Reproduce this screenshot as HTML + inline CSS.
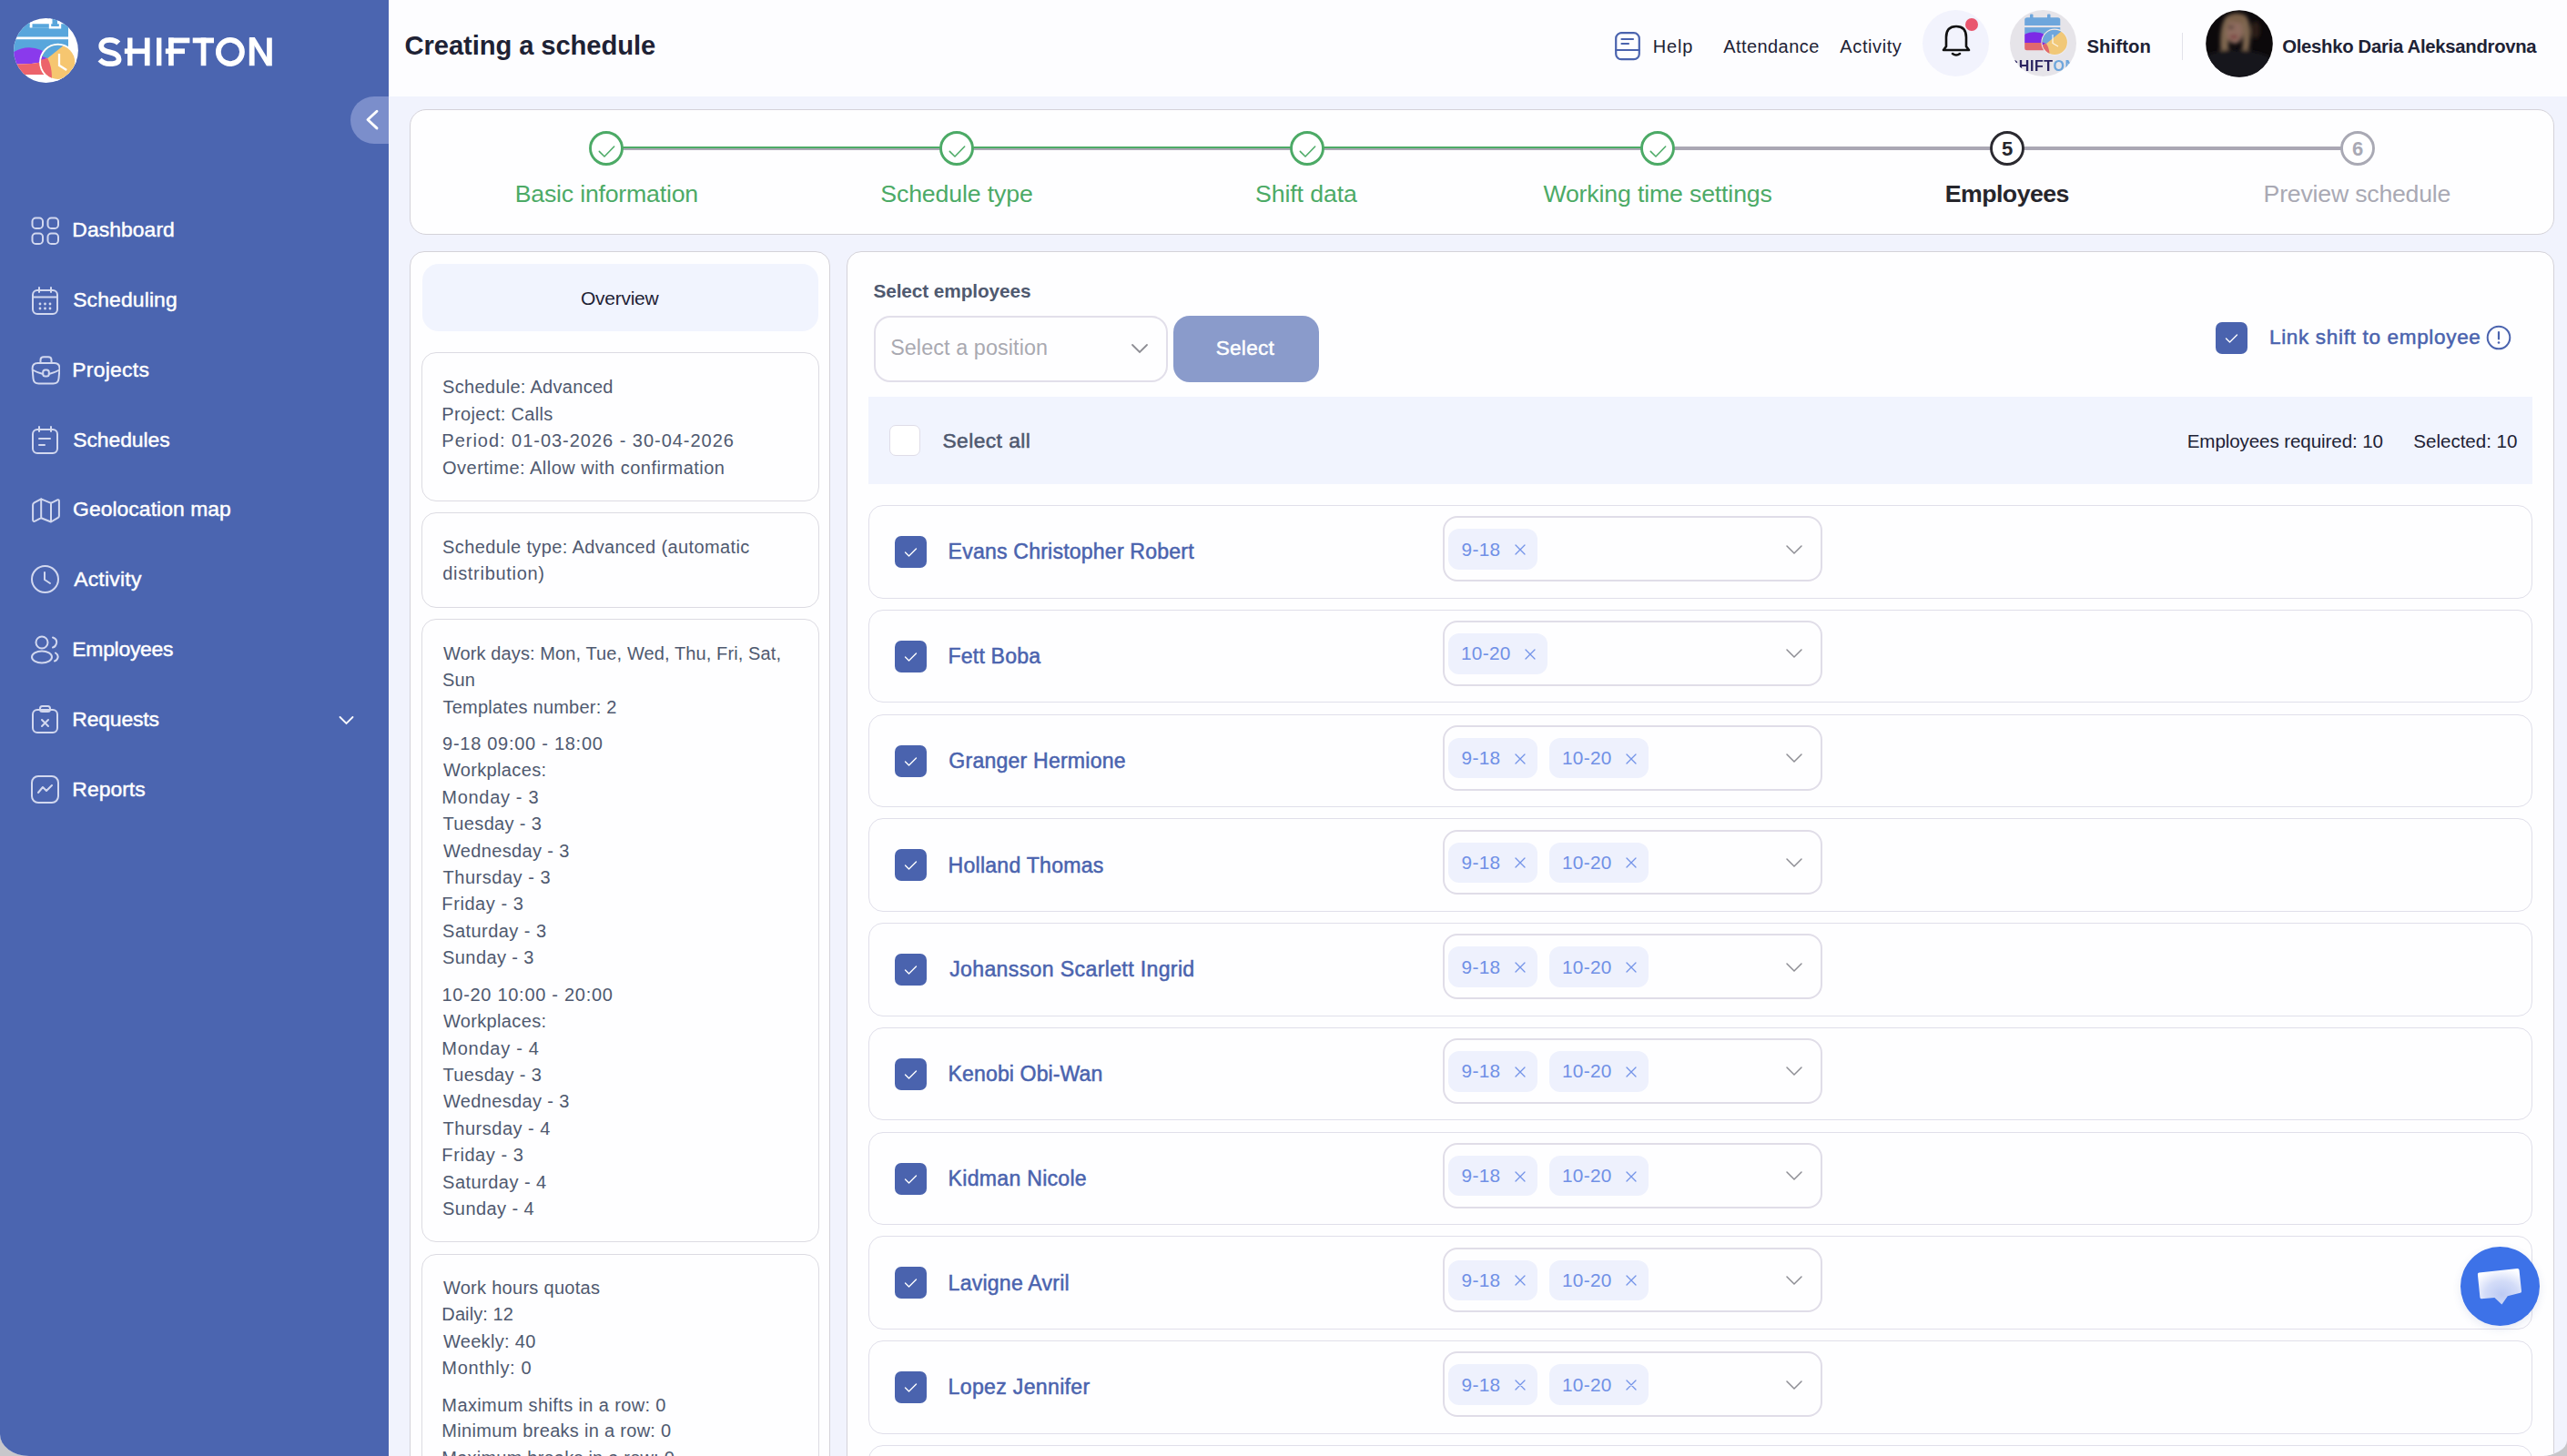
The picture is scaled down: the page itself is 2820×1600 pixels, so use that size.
<!DOCTYPE html>
<html><head><meta charset="utf-8"><title>Creating a schedule</title>
<style>
html,body{margin:0;padding:0;}
body{width:2820px;height:1600px;overflow:hidden;background:#c8c7cb;font-family:"Liberation Sans", sans-serif;}
#app{position:absolute;left:0;top:0;width:2820px;height:1600px;overflow:hidden;background:#f1f3fd;border-bottom-left-radius:32px 24px;border-bottom-right-radius:30px 17px;}
.t{position:absolute;white-space:nowrap;}
.r{position:absolute;}
</style></head><body><div id="app">
<div class="r" style="left:0.0px;top:0.0px;width:427.0px;height:1600.0px;background:#4b65b0;"></div>
<svg class="r" style="left:15px;top:20px;" width="71" height="71" viewBox="0 0 71 71">
<defs><clipPath id="lc"><circle cx="35.5" cy="35.5" r="35.4"/></clipPath><clipPath id="lk"><circle cx="48.7" cy="48.3" r="18.6"/></clipPath></defs>
<circle cx="35.5" cy="35.5" r="35.4" fill="#fff"/>
<g clip-path="url(#lc)">
<path d="M0 6.3 H17.8 V10.3 H40 V6.3 H51 V10.3 V6.3 H60 V20.5 H0 Z" fill="#58a6dc"/>
<path d="M13 5 H17.8 V8.2 H13 Z" fill="#58a6dc"/>
<path d="M20.3 6.3 H40 V10.3 H20.3 Z" fill="#58a6dc"/>
<rect x="17.8" y="4" width="2.5" height="6.3" fill="#fff"/>
<path d="M40 0 V10.3 H51 V0" stroke="#fff" stroke-width="2.4" fill="none"/>
<rect x="42.5" y="0.5" width="5.5" height="7.7" fill="#58a6dc"/>
<rect x="0" y="23.2" width="60" height="20" fill="#58a6dc"/>
<path d="M0 37 Q15 28.5 30 35 Q36 38 40 44 L33 48 Q18 51 0 50.5 Z" fill="#8a3aec"/>
<path d="M0 50.5 Q18 51 33 48 L37 62 H0 Z" fill="#ec636b"/>
<circle cx="48.7" cy="48.3" r="20.6" fill="#fff"/>
<g clip-path="url(#lk)">
<rect x="28" y="28" width="42" height="42" fill="#f6c670"/>
<path d="M37.3 43.9 L56 29 L20 20 L20 40 Z" fill="#58a6dc"/>
<path d="M37.3 43.9 L20 38 L20 50 Z" fill="#8a3aec"/>
<path d="M37.3 43.9 Q43 55 41.7 70 L20 70 L20 48 Z" fill="#ec636b"/>
</g>
<path d="M50 39 V51.8 L58.2 57" stroke="#fff" stroke-width="2.3" fill="none"/>
</g></svg>
<svg class="r" style="left:100px;top:35px;" width="210" height="45" viewBox="0 0 210 45"><g fill="#fff">
<path d="M30.2 12.6 C27.5 9.8 24 8.9 20.6 8.9 C15.2 8.9 11.2 11.3 11.2 15.6 C11.2 20 15.2 21.2 20.6 22.4 C26.5 23.6 30.6 25.4 30.6 30 C30.6 33.9 26.4 35.2 20.6 35.2 C16.4 35.2 12.6 33.8 9.6 30.6" stroke="#fff" stroke-width="5.7" fill="none"/>
<rect x="40.1" y="6.5" width="5.4" height="30.7"/><rect x="58.9" y="6.5" width="5.7" height="30.7"/><rect x="36.8" y="18.4" width="22.5" height="5.7"/>
<rect x="72" y="6.5" width="5.4" height="30.7"/>
<rect x="85.1" y="6.5" width="5.7" height="30.7"/><rect x="85.1" y="6.5" width="23.3" height="5.8"/><rect x="81.8" y="18.4" width="21.2" height="5.7"/>
<rect x="111.7" y="6.5" width="23.3" height="5.8"/><rect x="120.7" y="6.5" width="5.7" height="30.7"/>
<circle cx="152.9" cy="22" r="13.05" stroke="#fff" stroke-width="5.8" fill="none"/>
<rect x="173.8" y="6.5" width="5.8" height="30.7"/><rect x="193.1" y="6.5" width="5.7" height="30.7"/><path d="M173.8 6.1 H179.8 L198.8 37.2 H192.8 Z"/>
</g></svg>
<div class="r" style="left:385.0px;top:106.0px;width:42.0px;height:52.0px;background:#7b8ecb;border-radius:26px 0 0 26px;"></div>
<svg class="r" style="left:400px;top:118px;" width="18" height="28" viewBox="0 0 18 28"><path d="M14 4.2 L4 13.5 L14 22.9" stroke="#fff" stroke-width="2.9" fill="none" stroke-linecap="round" stroke-linejoin="round"/></svg>
<svg class="r" style="left:34px;top:237.7px;" width="32" height="32" viewBox="0 0 32 32"><g fill="none" stroke="#d2d8ef" stroke-width="2" stroke-linecap="round" stroke-linejoin="round"><rect x="1.5" y="1.5" width="11.5" height="11.5" rx="3.8"/><rect x="18.5" y="1.5" width="11.5" height="11.5" rx="3.8"/><rect x="1.5" y="18.5" width="11.5" height="11.5" rx="3.8"/><rect x="18.5" y="18.5" width="11.5" height="11.5" rx="3.8"/></g></svg>
<div class="t" style="left:79.32px;top:241.32px;font-size:22.9px;line-height:22.9px;color:#ffffff;font-weight:400;letter-spacing:0.066px;-webkit-text-stroke:0.45px #ffffff;">Dashboard</div>
<svg class="r" style="left:34px;top:314.6px;" width="32" height="32" viewBox="0 0 32 32"><g fill="none" stroke="#d2d8ef" stroke-width="2" stroke-linecap="round" stroke-linejoin="round"><rect x="2" y="4" width="27" height="26" rx="5"/><path d="M2 11.5 H29 M9 1 V6 M22 1 V6"/><g fill="#d2d8ef" stroke="none"><circle cx="10" cy="19" r="1.4"/><circle cx="15.5" cy="19" r="1.4"/><circle cx="21" cy="19" r="1.4"/><circle cx="10" cy="24" r="1.4"/><circle cx="15.5" cy="24" r="1.4"/><circle cx="21" cy="24" r="1.4"/></g></g></svg>
<div class="t" style="left:80.16px;top:318.22px;font-size:22.9px;line-height:22.9px;color:#ffffff;font-weight:400;letter-spacing:0.145px;-webkit-text-stroke:0.45px #ffffff;">Scheduling</div>
<svg class="r" style="left:34px;top:391.4px;" width="32" height="32" viewBox="0 0 32 32"><g fill="none" stroke="#d2d8ef" stroke-width="2" stroke-linecap="round" stroke-linejoin="round"><path d="M7.5 8 H25.5 Q31.5 8 31.5 14 L30.5 25 Q30 30.5 24.5 30.5 H8.5 Q3 30.5 2.5 25 L1.6 14 Q1.6 8 7.5 8 Z M10.5 8 V4.5 Q10.5 1.2 14 1.2 H19 Q22.5 1.2 22.5 4.5 V8 M1.8 15.5 Q7 18.5 13.2 20 M19.8 20 Q26 18.5 31.3 15.5"/><rect x="13.2" y="15.5" width="6.6" height="7" rx="2.5"/></g></svg>
<div class="t" style="left:79.32px;top:395.02px;font-size:22.9px;line-height:22.9px;color:#ffffff;font-weight:400;letter-spacing:0.269px;-webkit-text-stroke:0.45px #ffffff;">Projects</div>
<svg class="r" style="left:34px;top:468.4px;" width="32" height="32" viewBox="0 0 32 32"><g fill="none" stroke="#d2d8ef" stroke-width="2" stroke-linecap="round" stroke-linejoin="round"><rect x="2" y="4" width="27" height="26" rx="5"/><path d="M9 1 V6 M22 1 V6 M9 14 H21 M9 21 H15"/></g></svg>
<div class="t" style="left:80.16px;top:472.02px;font-size:22.9px;line-height:22.9px;color:#ffffff;font-weight:400;letter-spacing:-0.047px;-webkit-text-stroke:0.45px #ffffff;">Schedules</div>
<svg class="r" style="left:34px;top:544.6px;" width="32" height="32" viewBox="0 0 32 32"><g fill="none" stroke="#d2d8ef" stroke-width="2" stroke-linecap="round" stroke-linejoin="round"><path d="M2.1 10 Q2.1 8.3 3.6 7.4 L11.2 3.3 L22 7.8 L29 4.3 Q30.9 3.6 30.9 5.8 V22 Q30.9 23.2 29.8 23.9 L22 28.5 L11.2 24.2 L4.5 27.6 Q2.1 28.6 2.1 26 Z M11.2 3.3 V24.2 M22 7.8 V28.5"/></g></svg>
<div class="t" style="left:80.05px;top:548.22px;font-size:22.9px;line-height:22.9px;color:#ffffff;font-weight:400;letter-spacing:0.049px;-webkit-text-stroke:0.45px #ffffff;">Geolocation map</div>
<svg class="r" style="left:34px;top:621.4px;" width="32" height="32" viewBox="0 0 32 32"><g fill="none" stroke="#d2d8ef" stroke-width="2" stroke-linecap="round" stroke-linejoin="round"><circle cx="15.5" cy="15.5" r="14.5"/><path d="M15 8 V16 L21 20"/></g></svg>
<div class="t" style="left:81.16px;top:625.02px;font-size:22.9px;line-height:22.9px;color:#ffffff;font-weight:400;letter-spacing:0.252px;-webkit-text-stroke:0.45px #ffffff;">Activity</div>
<svg class="r" style="left:34px;top:698.3px;" width="32" height="32" viewBox="0 0 32 32"><g fill="none" stroke="#d2d8ef" stroke-width="2" stroke-linecap="round" stroke-linejoin="round"><circle cx="12" cy="8" r="6.5"/><ellipse cx="12" cy="24" rx="11" ry="6.5"/><path d="M24 2.5 Q29 4 28 9 Q27 13 24 13.5 M27 19.5 Q31 22 29 26 Q28 28 26 28.5"/></g></svg>
<div class="t" style="left:79.32px;top:701.92px;font-size:22.9px;line-height:22.9px;color:#ffffff;font-weight:400;letter-spacing:-0.259px;-webkit-text-stroke:0.45px #ffffff;">Employees</div>
<svg class="r" style="left:34px;top:775.0px;" width="32" height="32" viewBox="0 0 32 32"><g fill="none" stroke="#d2d8ef" stroke-width="2" stroke-linecap="round" stroke-linejoin="round"><rect x="2" y="5" width="27" height="25" rx="5"/><rect x="10" y="1" width="11" height="6" rx="2.5"/><path d="M12 16 L19 23 M19 16 L12 23"/></g></svg>
<div class="t" style="left:79.32px;top:778.62px;font-size:22.9px;line-height:22.9px;color:#ffffff;font-weight:400;letter-spacing:-0.163px;-webkit-text-stroke:0.45px #ffffff;">Requests</div>
<svg class="r" style="left:34px;top:852.1px;" width="32" height="32" viewBox="0 0 32 32"><g fill="none" stroke="#d2d8ef" stroke-width="2" stroke-linecap="round" stroke-linejoin="round"><rect x="1" y="1" width="29" height="29" rx="7"/><path d="M8 19 L13 13 L17 17 L23 11"/></g></svg>
<div class="t" style="left:79.32px;top:855.72px;font-size:22.9px;line-height:22.9px;color:#ffffff;font-weight:400;letter-spacing:0.037px;-webkit-text-stroke:0.45px #ffffff;">Reports</div>
<svg class="r" style="left:372px;top:786px;" width="17" height="11" viewBox="0 0 17 11"><path d="M1.5 2 L8.5 9 L15.5 2" stroke="#fff" stroke-width="1.8" fill="none" stroke-linecap="round"/></svg>
<div class="r" style="left:427.0px;top:0.0px;width:2393.0px;height:106.0px;background:#fdfdff;"></div>
<div class="t" style="left:444.60px;top:35.78px;font-size:29.2px;line-height:29.2px;color:#1e2235;font-weight:700;letter-spacing:-0.099px;">Creating a schedule</div>
<svg class="r" style="left:1773px;top:34px;" width="30" height="33" viewBox="0 0 30 33"><g fill="none" stroke="#4a63ae" stroke-width="2.2" stroke-linecap="round"><rect x="2.2" y="2.2" width="25.6" height="29" rx="6"/><path d="M2.2 21 H27.8 M8.5 9 H21 M8.5 14 H16"/></g></svg>
<div class="t" style="left:1815.76px;top:40.97px;font-size:20px;line-height:20px;color:#1e2235;font-weight:400;letter-spacing:0.849px;">Help</div>
<div class="t" style="left:1893.16px;top:40.97px;font-size:20px;line-height:20px;color:#1e2235;font-weight:400;letter-spacing:0.437px;">Attendance</div>
<div class="t" style="left:2021.36px;top:40.97px;font-size:20px;line-height:20px;color:#1e2235;font-weight:400;letter-spacing:0.591px;">Activity</div>
<div class="r" style="left:2112px;top:11px;width:73px;height:73px;border-radius:50%;background:#f2f3fd;"></div>
<svg class="r" style="left:2132px;top:26px;" width="34" height="38" viewBox="0 0 34 38"><g fill="none" stroke="#111" stroke-width="2.6" stroke-linecap="round" stroke-linejoin="round"><path d="M6 25 V15 Q6 3 17 3 Q28 3 28 15 V25 L31 29 H3 Z"/><path d="M13 33 Q17 36 21 33"/></g></svg>
<div class="r" style="left:2159px;top:20px;width:14px;height:14px;border-radius:50%;background:#e9566e;"></div>
<svg class="r" style="left:2208px;top:11px;" width="73" height="73" viewBox="0 0 73 73">
<defs><clipPath id="ac"><circle cx="36.5" cy="36.5" r="36.5"/></clipPath><clipPath id="ak"><circle cx="49.2" cy="35.4" r="13.7"/></clipPath><filter id="ab"><feGaussianBlur stdDeviation="0.5"/></filter></defs>
<circle cx="36.5" cy="36.5" r="36.5" fill="#e6e4e9"/>
<g clip-path="url(#ac)" filter="url(#ab)">
<rect x="22" y="4.5" width="3.5" height="6.5" rx="1" fill="#6ea6dc"/>
<rect x="41" y="4.5" width="3.5" height="6.5" rx="1" fill="#6ea6dc"/>
<path d="M16.2 17 V11 Q16.2 8.3 19 8.3 H52.5 Q55.3 8.3 55.3 11 V17 Z" fill="#6ea6dc"/>
<rect x="16.2" y="19.1" width="39.1" height="7" fill="#6ea6dc"/>
<path d="M16.2 26.5 Q28 21.5 40 27.5 V36 H16.2 Z" fill="#7b2ae6"/>
<path d="M16.2 36 H37.5 V44.2 H18.5 Q16.2 44.2 16.2 42 Z" fill="#e0686e"/>
<circle cx="49.2" cy="35.4" r="14.8" fill="#eceaf0"/>
<g clip-path="url(#ak)">
<rect x="30" y="20" width="35" height="32" fill="#f1c878"/>
<path d="M40 37 L57 23 L30 18 V33 Z" fill="#6ea6dc"/>
<path d="M40 37 L30 33 V40 Z" fill="#7b2ae6"/>
<path d="M40 37 Q44 43 43.5 52 H30 V40 Z" fill="#e0686e"/>
</g>
<path d="M47 27 V36.5 L53 40" stroke="#fff" stroke-width="1.3" fill="none" opacity="0.8"/>
<text x="-1.5" y="66.7" font-family="Liberation Sans" font-weight="700" font-size="16" fill="#2a2460" letter-spacing="0.6">SHIFT<tspan fill="#6ea6dc">ON</tspan></text>
</g></svg>
<div class="t" style="left:2292.42px;top:41.22px;font-size:20.3px;line-height:20.3px;color:#1e2235;font-weight:700;letter-spacing:0.124px;">Shifton</div>
<div class="r" style="left:2396.5px;top:36.0px;width:1.0px;height:30.0px;background:#e2e2ea;"></div>
<svg class="r" style="left:2423px;top:11px;" width="74" height="74" viewBox="0 0 74 74">
<defs><clipPath id="uc"><circle cx="37" cy="37" r="36.8"/></clipPath><filter id="ub" x="-50%" y="-50%" width="200%" height="200%"><feGaussianBlur stdDeviation="2.2"/></filter></defs>
<circle cx="37" cy="37" r="36.8" fill="#0c090b"/>
<g clip-path="url(#uc)">
<g filter="url(#ub)">
<path d="M17 50 Q14 20 22 8 Q32 0 44 6 Q50 14 49 30 Q48 44 45 50 L40 44 Q42 30 40 20 L26 20 Q24 34 26 52 Z" fill="#7e6650"/>
<ellipse cx="32" cy="24" rx="9" ry="13" fill="#8e6c5e"/>
<ellipse cx="35" cy="9" rx="10" ry="5" fill="#7a6048"/>
<ellipse cx="31" cy="29.5" rx="4" ry="2" fill="#7a3a3c"/>
<ellipse cx="28" cy="19" rx="3" ry="1.5" fill="#3a2a28"/>
<path d="M0 74 V50 Q20 42 37 44 Q60 44 74 54 V74 Z" fill="#17161b"/><ellipse cx="55" cy="22" rx="5" ry="10" fill="#2a1d16"/>
</g>
</g></svg>
<div class="t" style="left:2507.17px;top:41.22px;font-size:20.3px;line-height:20.3px;color:#1e2235;font-weight:700;letter-spacing:-0.277px;">Oleshko Daria Aleksandrovna</div>
<div class="r" style="left:450.0px;top:120.0px;width:2356.0px;height:138.0px;background:#fefeff;border:1px solid #d4d2d9;border-radius:18px;box-sizing:border-box;"></div>
<div class="r" style="left:684.0px;top:161.0px;width:349.0px;height:3.8px;background:#aaa7b4;"></div>
<div class="r" style="left:684.0px;top:161.0px;width:349.0px;height:1.9px;background:#4caa66;"></div>
<div class="r" style="left:1069.0px;top:161.0px;width:348.5px;height:3.8px;background:#aaa7b4;"></div>
<div class="r" style="left:1069.0px;top:161.0px;width:348.5px;height:1.9px;background:#4caa66;"></div>
<div class="r" style="left:1453.5px;top:161.0px;width:349.0px;height:3.8px;background:#aaa7b4;"></div>
<div class="r" style="left:1453.5px;top:161.0px;width:349.0px;height:1.9px;background:#4caa66;"></div>
<div class="r" style="left:1838.5px;top:161.0px;width:348.5px;height:3.8px;background:#aaa7b4;"></div>
<div class="r" style="left:2223.0px;top:161.0px;width:349.0px;height:3.8px;background:#aaa7b4;"></div>
<svg class="r" style="left:646px;top:143px;" width="40" height="40" viewBox="0 0 40 40"><circle cx="20" cy="20" r="17.5" fill="#fff" stroke="#4caa66" stroke-width="2.9"/><path d="M12.3 23.4 L18 29 L28.7 18" stroke="#4caa66" stroke-width="1.5" fill="none" stroke-linecap="round" stroke-linejoin="round"/></svg>
<svg class="r" style="left:1031px;top:143px;" width="40" height="40" viewBox="0 0 40 40"><circle cx="20" cy="20" r="17.5" fill="#fff" stroke="#4caa66" stroke-width="2.9"/><path d="M12.3 23.4 L18 29 L28.7 18" stroke="#4caa66" stroke-width="1.5" fill="none" stroke-linecap="round" stroke-linejoin="round"/></svg>
<svg class="r" style="left:1415.5px;top:143px;" width="40" height="40" viewBox="0 0 40 40"><circle cx="20" cy="20" r="17.5" fill="#fff" stroke="#4caa66" stroke-width="2.9"/><path d="M12.3 23.4 L18 29 L28.7 18" stroke="#4caa66" stroke-width="1.5" fill="none" stroke-linecap="round" stroke-linejoin="round"/></svg>
<svg class="r" style="left:1800.5px;top:143px;" width="40" height="40" viewBox="0 0 40 40"><circle cx="20" cy="20" r="17.5" fill="#fff" stroke="#4caa66" stroke-width="2.9"/><path d="M12.3 23.4 L18 29 L28.7 18" stroke="#4caa66" stroke-width="1.5" fill="none" stroke-linecap="round" stroke-linejoin="round"/></svg>
<svg class="r" style="left:2185px;top:143px;" width="40" height="40" viewBox="0 0 40 40"><circle cx="20" cy="20" r="17.5" fill="#fff" stroke="#2b2a30" stroke-width="2.9"/></svg>
<div class="t" style="left:2185.0px;top:152.9px;font-size:22px;line-height:22px;color:#26262c;font-weight:700;width:40px;text-align:center;">5</div>
<svg class="r" style="left:2570px;top:143px;" width="40" height="40" viewBox="0 0 40 40"><circle cx="20" cy="20" r="17.5" fill="#fff" stroke="#a9a9b4" stroke-width="2.9"/></svg>
<div class="t" style="left:2570.0px;top:152.9px;font-size:22px;line-height:22px;color:#a9a9b4;font-weight:700;width:40px;text-align:center;">6</div>
<div class="t" style="left:565.71px;top:200.00px;font-size:26.7px;line-height:26.7px;color:#4caa66;font-weight:400;letter-spacing:-0.204px;">Basic information</div>
<div class="t" style="left:967.29px;top:200.00px;font-size:26.7px;line-height:26.7px;color:#4caa66;font-weight:400;letter-spacing:-0.135px;">Schedule type</div>
<div class="t" style="left:1378.99px;top:200.00px;font-size:26.7px;line-height:26.7px;color:#4caa66;font-weight:400;letter-spacing:-0.100px;">Shift data</div>
<div class="t" style="left:1695.38px;top:200.00px;font-size:26.7px;line-height:26.7px;color:#4caa66;font-weight:400;letter-spacing:-0.157px;">Working time settings</div>
<div class="t" style="left:2136.71px;top:200.00px;font-size:26.7px;line-height:26.7px;color:#26262c;font-weight:700;letter-spacing:-0.525px;">Employees</div>
<div class="t" style="left:2486.61px;top:200.00px;font-size:26.7px;line-height:26.7px;color:#a9a9b4;font-weight:400;letter-spacing:-0.225px;">Preview schedule</div>
<div class="r" style="left:450.0px;top:276.0px;width:462.0px;height:1424.0px;background:#fefeff;border:1px solid #d4d2d9;border-radius:16px;box-sizing:border-box;"></div>
<div class="r" style="left:464.0px;top:290.0px;width:435.0px;height:74.0px;background:#f1f4fe;border-radius:18px;"></div>
<div class="t" style="left:638.01px;top:316.62px;font-size:21px;line-height:21px;color:#1e2235;font-weight:400;letter-spacing:-0.268px;">Overview</div>
<div class="r" style="left:463.0px;top:387.0px;width:437.0px;height:164.0px;background:#fefeff;border:1px solid #dcdbe2;border-radius:16px;box-sizing:border-box;"></div>
<div class="r" style="left:463.0px;top:563.0px;width:437.0px;height:105.0px;background:#fefeff;border:1px solid #dcdbe2;border-radius:16px;box-sizing:border-box;"></div>
<div class="r" style="left:463.0px;top:680.0px;width:437.0px;height:685.0px;background:#fefeff;border:1px solid #dcdbe2;border-radius:16px;box-sizing:border-box;"></div>
<div class="r" style="left:463.0px;top:1378.0px;width:437.0px;height:322.0px;background:#fefeff;border:1px solid #dcdbe2;border-radius:16px;box-sizing:border-box;"></div>
<div class="t" style="left:486.09px;top:415.27px;font-size:20px;line-height:20px;color:#4f596f;font-weight:400;letter-spacing:0.296px;">Schedule: Advanced</div>
<div class="t" style="left:485.36px;top:445.07px;font-size:20px;line-height:20px;color:#4f596f;font-weight:400;letter-spacing:0.319px;">Project: Calls</div>
<div class="t" style="left:485.36px;top:473.87px;font-size:20px;line-height:20px;color:#4f596f;font-weight:400;letter-spacing:0.974px;">Period: 01-03-2026 - 30-04-2026</div>
<div class="t" style="left:486.05px;top:504.07px;font-size:20px;line-height:20px;color:#4f596f;font-weight:400;letter-spacing:0.481px;">Overtime: Allow with confirmation</div>
<div class="t" style="left:486.09px;top:590.77px;font-size:20px;line-height:20px;color:#4f596f;font-weight:400;letter-spacing:0.378px;">Schedule type: Advanced (automatic</div>
<div class="t" style="left:486.16px;top:619.57px;font-size:20px;line-height:20px;color:#4f596f;font-weight:400;letter-spacing:0.708px;">distribution)</div>
<div class="t" style="left:486.91px;top:708.07px;font-size:20px;line-height:20px;color:#4f596f;font-weight:400;letter-spacing:0.110px;">Work days: Mon, Tue, Wed, Thu, Fri, Sat,</div>
<div class="t" style="left:486.09px;top:737.37px;font-size:20px;line-height:20px;color:#4f596f;font-weight:400;letter-spacing:0.111px;">Sun</div>
<div class="t" style="left:486.55px;top:766.97px;font-size:20px;line-height:20px;color:#4f596f;font-weight:400;letter-spacing:0.227px;">Templates number: 2</div>
<div class="t" style="left:486.06px;top:807.07px;font-size:20px;line-height:20px;color:#4f596f;font-weight:400;letter-spacing:0.727px;">9-18 09:00 - 18:00</div>
<div class="t" style="left:486.91px;top:836.47px;font-size:20px;line-height:20px;color:#4f596f;font-weight:400;letter-spacing:0.348px;">Workplaces:</div>
<div class="t" style="left:485.36px;top:866.07px;font-size:20px;line-height:20px;color:#4f596f;font-weight:400;letter-spacing:0.686px;">Monday - 3</div>
<div class="t" style="left:486.55px;top:894.77px;font-size:20px;line-height:20px;color:#4f596f;font-weight:400;letter-spacing:0.342px;">Tuesday - 3</div>
<div class="t" style="left:486.91px;top:924.97px;font-size:20px;line-height:20px;color:#4f596f;font-weight:400;letter-spacing:0.363px;">Wednesday - 3</div>
<div class="t" style="left:486.55px;top:953.67px;font-size:20px;line-height:20px;color:#4f596f;font-weight:400;letter-spacing:0.524px;">Thursday - 3</div>
<div class="t" style="left:485.36px;top:982.97px;font-size:20px;line-height:20px;color:#4f596f;font-weight:400;letter-spacing:0.573px;">Friday - 3</div>
<div class="t" style="left:486.09px;top:1013.07px;font-size:20px;line-height:20px;color:#4f596f;font-weight:400;letter-spacing:0.458px;">Saturday - 3</div>
<div class="t" style="left:486.09px;top:1041.87px;font-size:20px;line-height:20px;color:#4f596f;font-weight:400;letter-spacing:0.407px;">Sunday - 3</div>
<div class="t" style="left:485.48px;top:1082.67px;font-size:20px;line-height:20px;color:#4f596f;font-weight:400;letter-spacing:0.712px;">10-20 10:00 - 20:00</div>
<div class="t" style="left:486.91px;top:1112.07px;font-size:20px;line-height:20px;color:#4f596f;font-weight:400;letter-spacing:0.348px;">Workplaces:</div>
<div class="t" style="left:485.36px;top:1141.67px;font-size:20px;line-height:20px;color:#4f596f;font-weight:400;letter-spacing:0.731px;">Monday - 4</div>
<div class="t" style="left:486.55px;top:1170.97px;font-size:20px;line-height:20px;color:#4f596f;font-weight:400;letter-spacing:0.342px;">Tuesday - 3</div>
<div class="t" style="left:486.91px;top:1199.87px;font-size:20px;line-height:20px;color:#4f596f;font-weight:400;letter-spacing:0.363px;">Wednesday - 3</div>
<div class="t" style="left:486.55px;top:1229.87px;font-size:20px;line-height:20px;color:#4f596f;font-weight:400;letter-spacing:0.515px;">Thursday - 4</div>
<div class="t" style="left:485.36px;top:1258.77px;font-size:20px;line-height:20px;color:#4f596f;font-weight:400;letter-spacing:0.573px;">Friday - 3</div>
<div class="t" style="left:486.09px;top:1288.77px;font-size:20px;line-height:20px;color:#4f596f;font-weight:400;letter-spacing:0.468px;">Saturday - 4</div>
<div class="t" style="left:486.09px;top:1317.67px;font-size:20px;line-height:20px;color:#4f596f;font-weight:400;letter-spacing:0.418px;">Sunday - 4</div>
<div class="t" style="left:486.91px;top:1404.87px;font-size:20px;line-height:20px;color:#4f596f;font-weight:400;letter-spacing:0.285px;">Work hours quotas</div>
<div class="t" style="left:485.36px;top:1434.47px;font-size:20px;line-height:20px;color:#4f596f;font-weight:400;letter-spacing:0.092px;">Daily: 12</div>
<div class="t" style="left:486.91px;top:1463.77px;font-size:20px;line-height:20px;color:#4f596f;font-weight:400;letter-spacing:0.316px;">Weekly: 40</div>
<div class="t" style="left:485.36px;top:1492.67px;font-size:20px;line-height:20px;color:#4f596f;font-weight:400;letter-spacing:0.673px;">Monthly: 0</div>
<div class="t" style="left:485.36px;top:1533.77px;font-size:20px;line-height:20px;color:#4f596f;font-weight:400;letter-spacing:0.376px;">Maximum shifts in a row: 0</div>
<div class="t" style="left:485.36px;top:1562.37px;font-size:20px;line-height:20px;color:#4f596f;font-weight:400;letter-spacing:0.292px;">Minimum breaks in a row: 0</div>
<div class="t" style="left:485.36px;top:1591.57px;font-size:20px;line-height:20px;color:#4f596f;font-weight:400;letter-spacing:0.214px;">Maximum breaks in a row: 0</div>
<div class="r" style="left:930.0px;top:276.0px;width:1876.0px;height:1424.0px;background:#fefeff;border:1px solid #d4d2d9;border-radius:16px;box-sizing:border-box;"></div>
<div class="t" style="left:959.40px;top:309.69px;font-size:20.8px;line-height:20.8px;color:#4f596f;font-weight:700;letter-spacing:-0.096px;">Select employees</div>
<div class="r" style="left:959.5px;top:346.5px;width:323.5px;height:73.0px;background:#fefeff;border:2px solid #e2dfea;border-radius:18px;box-sizing:border-box;"></div>
<div class="t" style="left:978.14px;top:371.28px;font-size:23.3px;line-height:23.3px;color:#a9a9b1;font-weight:400;letter-spacing:0.119px;">Select a position</div>
<svg class="r" style="left:1242px;top:376px;" width="20" height="14" viewBox="0 0 20 14"><path d="M2 3 L10 11 L18 3" stroke="#8d8d94" stroke-width="1.8" fill="none" stroke-linecap="round"/></svg>
<div class="r" style="left:1289.4px;top:346.5px;width:159.6px;height:73.0px;background:#8a9bcb;border-radius:18px;"></div>
<div class="t" style="left:1335.77px;top:371.87px;font-size:22.6px;line-height:22.6px;color:#ffffff;font-weight:400;letter-spacing:0.236px;-webkit-text-stroke:0.45px #ffffff;">Select</div>
<div class="r" style="left:2434.0px;top:354.0px;width:35.0px;height:35.0px;background:#4a63ae;border-radius:7px;"></div>
<svg class="r" style="left:2434px;top:354px;" width="35" height="35" viewBox="0 0 35 35"><path d="M11.5 18 L15.5 22 L23.5 14" stroke="#fff" stroke-width="1.35" fill="none" stroke-linecap="round" stroke-linejoin="round"/></svg>
<div class="t" style="left:2492.95px;top:360.25px;font-size:22.5px;line-height:22.5px;color:#4a63ae;font-weight:400;letter-spacing:0.682px;-webkit-text-stroke:0.5px #4a63ae;">Link shift to employee</div>
<svg class="r" style="left:2731px;top:357px;" width="28" height="28" viewBox="0 0 28 28"><circle cx="14" cy="14" r="12.3" stroke="#4a63ae" stroke-width="2" fill="none"/><path d="M14 8 V15.5" stroke="#4a63ae" stroke-width="2.2" stroke-linecap="round"/><circle cx="14" cy="19.5" r="1.3" fill="#4a63ae"/></svg>
<div class="r" style="left:954.0px;top:436.0px;width:1828.0px;height:96.0px;background:#f1f4fe;"></div>
<div class="r" style="left:976.5px;top:467.0px;width:34.0px;height:34.0px;background:#fff;border:1px solid #dfdde8;border-radius:7px;box-sizing:border-box;"></div>
<div class="t" style="left:1035.46px;top:473.30px;font-size:22.8px;line-height:22.8px;color:#4f596f;font-weight:400;letter-spacing:0.427px;-webkit-text-stroke:0.5px #4d566e;">Select all</div>
<div class="t" style="left:2402.71px;top:474.76px;font-size:20.6px;line-height:20.6px;color:#1e2235;font-weight:400;letter-spacing:-0.103px;">Employees required: 10</div>
<div class="t" style="left:2651.36px;top:474.76px;font-size:20.6px;line-height:20.6px;color:#1e2235;font-weight:400;letter-spacing:-0.044px;">Selected: 10</div>
<div class="r" style="left:954.0px;top:555.0px;width:1828.0px;height:102.5px;background:#fefeff;border:1px solid #e0dfea;border-radius:16px;box-sizing:border-box;"></div>
<div class="r" style="left:983.0px;top:589.0px;width:35.0px;height:35.0px;background:#4a63ae;border-radius:7px;"></div>
<svg class="r" style="left:983px;top:589.0px;" width="35" height="35" viewBox="0 0 35 35"><path d="M11.5 18 L15.5 22 L23.5 14" stroke="#fff" stroke-width="1.35" fill="none" stroke-linecap="round" stroke-linejoin="round"/></svg>
<div class="t" style="left:1041.61px;top:595.25px;font-size:23.1px;line-height:23.1px;color:#4a63ae;font-weight:400;letter-spacing:0.187px;-webkit-text-stroke:0.5px #4a63ae;">Evans Christopher Robert</div>
<div class="r" style="left:1584.5px;top:567.4px;width:417.0px;height:71.8px;background:#fefeff;border:2px solid #e0dde8;border-radius:16px;box-sizing:border-box;"></div>
<div class="r" style="left:1591.3px;top:581.3px;width:97.4px;height:44.6px;background:#eef1fd;border-radius:12px;"></div>
<div class="t" style="left:1605.53px;top:593.59px;font-size:20.8px;line-height:20.8px;color:#7090e6;font-weight:400;letter-spacing:0.316px;">9-18</div>
<svg class="r" style="left:1663.8px;top:598.0px;" width="12" height="12" viewBox="0 0 12 12"><path d="M1 1 L11 11 M11 1 L1 11" stroke="#7393e8" stroke-width="1.3" stroke-linecap="round"/></svg>
<svg class="r" style="left:1961px;top:597.5px;" width="20" height="12" viewBox="0 0 20 12"><path d="M2 2 L10 10 L18 2" stroke="#8d8d94" stroke-width="1.5" fill="none" stroke-linecap="round"/></svg>
<div class="r" style="left:954.0px;top:669.8px;width:1828.0px;height:102.5px;background:#fefeff;border:1px solid #e0dfea;border-radius:16px;box-sizing:border-box;"></div>
<div class="r" style="left:983.0px;top:703.8px;width:35.0px;height:35.0px;background:#4a63ae;border-radius:7px;"></div>
<svg class="r" style="left:983px;top:703.8px;" width="35" height="35" viewBox="0 0 35 35"><path d="M11.5 18 L15.5 22 L23.5 14" stroke="#fff" stroke-width="1.35" fill="none" stroke-linecap="round" stroke-linejoin="round"/></svg>
<div class="t" style="left:1041.61px;top:710.00px;font-size:23.1px;line-height:23.1px;color:#4a63ae;font-weight:400;letter-spacing:0.154px;-webkit-text-stroke:0.5px #4a63ae;">Fett Boba</div>
<div class="r" style="left:1584.5px;top:682.1px;width:417.0px;height:71.8px;background:#fefeff;border:2px solid #e0dde8;border-radius:16px;box-sizing:border-box;"></div>
<div class="r" style="left:1591.3px;top:696.0px;width:109.2px;height:44.6px;background:#eef1fd;border-radius:12px;"></div>
<div class="t" style="left:1604.92px;top:708.34px;font-size:20.8px;line-height:20.8px;color:#7090e6;font-weight:400;letter-spacing:0.325px;">10-20</div>
<svg class="r" style="left:1674.9px;top:712.8px;" width="12" height="12" viewBox="0 0 12 12"><path d="M1 1 L11 11 M11 1 L1 11" stroke="#7393e8" stroke-width="1.3" stroke-linecap="round"/></svg>
<svg class="r" style="left:1961px;top:712.2px;" width="20" height="12" viewBox="0 0 20 12"><path d="M2 2 L10 10 L18 2" stroke="#8d8d94" stroke-width="1.5" fill="none" stroke-linecap="round"/></svg>
<div class="r" style="left:954.0px;top:784.5px;width:1828.0px;height:102.5px;background:#fefeff;border:1px solid #e0dfea;border-radius:16px;box-sizing:border-box;"></div>
<div class="r" style="left:983.0px;top:818.5px;width:35.0px;height:35.0px;background:#4a63ae;border-radius:7px;"></div>
<svg class="r" style="left:983px;top:818.5px;" width="35" height="35" viewBox="0 0 35 35"><path d="M11.5 18 L15.5 22 L23.5 14" stroke="#fff" stroke-width="1.35" fill="none" stroke-linecap="round" stroke-linejoin="round"/></svg>
<div class="t" style="left:1042.34px;top:824.75px;font-size:23.1px;line-height:23.1px;color:#4a63ae;font-weight:400;letter-spacing:0.199px;-webkit-text-stroke:0.5px #4a63ae;">Granger Hermione</div>
<div class="r" style="left:1584.5px;top:796.9px;width:417.0px;height:71.8px;background:#fefeff;border:2px solid #e0dde8;border-radius:16px;box-sizing:border-box;"></div>
<div class="r" style="left:1591.3px;top:810.8px;width:97.4px;height:44.6px;background:#eef1fd;border-radius:12px;"></div>
<div class="t" style="left:1605.53px;top:823.09px;font-size:20.8px;line-height:20.8px;color:#7090e6;font-weight:400;letter-spacing:0.316px;">9-18</div>
<svg class="r" style="left:1663.8px;top:827.5px;" width="12" height="12" viewBox="0 0 12 12"><path d="M1 1 L11 11 M11 1 L1 11" stroke="#7393e8" stroke-width="1.3" stroke-linecap="round"/></svg>
<div class="r" style="left:1702.3px;top:810.8px;width:109.2px;height:44.6px;background:#eef1fd;border-radius:12px;"></div>
<div class="t" style="left:1715.92px;top:823.09px;font-size:20.8px;line-height:20.8px;color:#7090e6;font-weight:400;letter-spacing:0.325px;">10-20</div>
<svg class="r" style="left:1785.9px;top:827.5px;" width="12" height="12" viewBox="0 0 12 12"><path d="M1 1 L11 11 M11 1 L1 11" stroke="#7393e8" stroke-width="1.3" stroke-linecap="round"/></svg>
<svg class="r" style="left:1961px;top:827.0px;" width="20" height="12" viewBox="0 0 20 12"><path d="M2 2 L10 10 L18 2" stroke="#8d8d94" stroke-width="1.5" fill="none" stroke-linecap="round"/></svg>
<div class="r" style="left:954.0px;top:899.2px;width:1828.0px;height:102.5px;background:#fefeff;border:1px solid #e0dfea;border-radius:16px;box-sizing:border-box;"></div>
<div class="r" style="left:983.0px;top:933.2px;width:35.0px;height:35.0px;background:#4a63ae;border-radius:7px;"></div>
<svg class="r" style="left:983px;top:933.2px;" width="35" height="35" viewBox="0 0 35 35"><path d="M11.5 18 L15.5 22 L23.5 14" stroke="#fff" stroke-width="1.35" fill="none" stroke-linecap="round" stroke-linejoin="round"/></svg>
<div class="t" style="left:1041.61px;top:939.50px;font-size:23.1px;line-height:23.1px;color:#4a63ae;font-weight:400;letter-spacing:0.226px;-webkit-text-stroke:0.5px #4a63ae;">Holland Thomas</div>
<div class="r" style="left:1584.5px;top:911.6px;width:417.0px;height:71.8px;background:#fefeff;border:2px solid #e0dde8;border-radius:16px;box-sizing:border-box;"></div>
<div class="r" style="left:1591.3px;top:925.5px;width:97.4px;height:44.6px;background:#eef1fd;border-radius:12px;"></div>
<div class="t" style="left:1605.53px;top:937.84px;font-size:20.8px;line-height:20.8px;color:#7090e6;font-weight:400;letter-spacing:0.316px;">9-18</div>
<svg class="r" style="left:1663.8px;top:942.2px;" width="12" height="12" viewBox="0 0 12 12"><path d="M1 1 L11 11 M11 1 L1 11" stroke="#7393e8" stroke-width="1.3" stroke-linecap="round"/></svg>
<div class="r" style="left:1702.3px;top:925.5px;width:109.2px;height:44.6px;background:#eef1fd;border-radius:12px;"></div>
<div class="t" style="left:1715.92px;top:937.84px;font-size:20.8px;line-height:20.8px;color:#7090e6;font-weight:400;letter-spacing:0.325px;">10-20</div>
<svg class="r" style="left:1785.9px;top:942.2px;" width="12" height="12" viewBox="0 0 12 12"><path d="M1 1 L11 11 M11 1 L1 11" stroke="#7393e8" stroke-width="1.3" stroke-linecap="round"/></svg>
<svg class="r" style="left:1961px;top:941.8px;" width="20" height="12" viewBox="0 0 20 12"><path d="M2 2 L10 10 L18 2" stroke="#8d8d94" stroke-width="1.5" fill="none" stroke-linecap="round"/></svg>
<div class="r" style="left:954.0px;top:1014.0px;width:1828.0px;height:102.5px;background:#fefeff;border:1px solid #e0dfea;border-radius:16px;box-sizing:border-box;"></div>
<div class="r" style="left:983.0px;top:1048.0px;width:35.0px;height:35.0px;background:#4a63ae;border-radius:7px;"></div>
<svg class="r" style="left:983px;top:1048.0px;" width="35" height="35" viewBox="0 0 35 35"><path d="M11.5 18 L15.5 22 L23.5 14" stroke="#fff" stroke-width="1.35" fill="none" stroke-linecap="round" stroke-linejoin="round"/></svg>
<div class="t" style="left:1043.14px;top:1054.25px;font-size:23.1px;line-height:23.1px;color:#4a63ae;font-weight:400;letter-spacing:0.354px;-webkit-text-stroke:0.5px #4a63ae;">Johansson Scarlett Ingrid</div>
<div class="r" style="left:1584.5px;top:1026.4px;width:417.0px;height:71.8px;background:#fefeff;border:2px solid #e0dde8;border-radius:16px;box-sizing:border-box;"></div>
<div class="r" style="left:1591.3px;top:1040.3px;width:97.4px;height:44.6px;background:#eef1fd;border-radius:12px;"></div>
<div class="t" style="left:1605.53px;top:1052.59px;font-size:20.8px;line-height:20.8px;color:#7090e6;font-weight:400;letter-spacing:0.316px;">9-18</div>
<svg class="r" style="left:1663.8px;top:1057.0px;" width="12" height="12" viewBox="0 0 12 12"><path d="M1 1 L11 11 M11 1 L1 11" stroke="#7393e8" stroke-width="1.3" stroke-linecap="round"/></svg>
<div class="r" style="left:1702.3px;top:1040.3px;width:109.2px;height:44.6px;background:#eef1fd;border-radius:12px;"></div>
<div class="t" style="left:1715.92px;top:1052.59px;font-size:20.8px;line-height:20.8px;color:#7090e6;font-weight:400;letter-spacing:0.325px;">10-20</div>
<svg class="r" style="left:1785.9px;top:1057.0px;" width="12" height="12" viewBox="0 0 12 12"><path d="M1 1 L11 11 M11 1 L1 11" stroke="#7393e8" stroke-width="1.3" stroke-linecap="round"/></svg>
<svg class="r" style="left:1961px;top:1056.5px;" width="20" height="12" viewBox="0 0 20 12"><path d="M2 2 L10 10 L18 2" stroke="#8d8d94" stroke-width="1.5" fill="none" stroke-linecap="round"/></svg>
<div class="r" style="left:954.0px;top:1128.8px;width:1828.0px;height:102.5px;background:#fefeff;border:1px solid #e0dfea;border-radius:16px;box-sizing:border-box;"></div>
<div class="r" style="left:983.0px;top:1162.8px;width:35.0px;height:35.0px;background:#4a63ae;border-radius:7px;"></div>
<svg class="r" style="left:983px;top:1162.8px;" width="35" height="35" viewBox="0 0 35 35"><path d="M11.5 18 L15.5 22 L23.5 14" stroke="#fff" stroke-width="1.35" fill="none" stroke-linecap="round" stroke-linejoin="round"/></svg>
<div class="t" style="left:1041.61px;top:1169.00px;font-size:23.1px;line-height:23.1px;color:#4a63ae;font-weight:400;letter-spacing:0.093px;-webkit-text-stroke:0.5px #4a63ae;">Kenobi Obi-Wan</div>
<div class="r" style="left:1584.5px;top:1141.2px;width:417.0px;height:71.8px;background:#fefeff;border:2px solid #e0dde8;border-radius:16px;box-sizing:border-box;"></div>
<div class="r" style="left:1591.3px;top:1155.0px;width:97.4px;height:44.6px;background:#eef1fd;border-radius:12px;"></div>
<div class="t" style="left:1605.53px;top:1167.34px;font-size:20.8px;line-height:20.8px;color:#7090e6;font-weight:400;letter-spacing:0.316px;">9-18</div>
<svg class="r" style="left:1663.8px;top:1171.8px;" width="12" height="12" viewBox="0 0 12 12"><path d="M1 1 L11 11 M11 1 L1 11" stroke="#7393e8" stroke-width="1.3" stroke-linecap="round"/></svg>
<div class="r" style="left:1702.3px;top:1155.0px;width:109.2px;height:44.6px;background:#eef1fd;border-radius:12px;"></div>
<div class="t" style="left:1715.92px;top:1167.34px;font-size:20.8px;line-height:20.8px;color:#7090e6;font-weight:400;letter-spacing:0.325px;">10-20</div>
<svg class="r" style="left:1785.9px;top:1171.8px;" width="12" height="12" viewBox="0 0 12 12"><path d="M1 1 L11 11 M11 1 L1 11" stroke="#7393e8" stroke-width="1.3" stroke-linecap="round"/></svg>
<svg class="r" style="left:1961px;top:1171.2px;" width="20" height="12" viewBox="0 0 20 12"><path d="M2 2 L10 10 L18 2" stroke="#8d8d94" stroke-width="1.5" fill="none" stroke-linecap="round"/></svg>
<div class="r" style="left:954.0px;top:1243.5px;width:1828.0px;height:102.5px;background:#fefeff;border:1px solid #e0dfea;border-radius:16px;box-sizing:border-box;"></div>
<div class="r" style="left:983.0px;top:1277.5px;width:35.0px;height:35.0px;background:#4a63ae;border-radius:7px;"></div>
<svg class="r" style="left:983px;top:1277.5px;" width="35" height="35" viewBox="0 0 35 35"><path d="M11.5 18 L15.5 22 L23.5 14" stroke="#fff" stroke-width="1.35" fill="none" stroke-linecap="round" stroke-linejoin="round"/></svg>
<div class="t" style="left:1041.61px;top:1283.75px;font-size:23.1px;line-height:23.1px;color:#4a63ae;font-weight:400;letter-spacing:0.266px;-webkit-text-stroke:0.5px #4a63ae;">Kidman Nicole</div>
<div class="r" style="left:1584.5px;top:1255.9px;width:417.0px;height:71.8px;background:#fefeff;border:2px solid #e0dde8;border-radius:16px;box-sizing:border-box;"></div>
<div class="r" style="left:1591.3px;top:1269.8px;width:97.4px;height:44.6px;background:#eef1fd;border-radius:12px;"></div>
<div class="t" style="left:1605.53px;top:1282.09px;font-size:20.8px;line-height:20.8px;color:#7090e6;font-weight:400;letter-spacing:0.316px;">9-18</div>
<svg class="r" style="left:1663.8px;top:1286.5px;" width="12" height="12" viewBox="0 0 12 12"><path d="M1 1 L11 11 M11 1 L1 11" stroke="#7393e8" stroke-width="1.3" stroke-linecap="round"/></svg>
<div class="r" style="left:1702.3px;top:1269.8px;width:109.2px;height:44.6px;background:#eef1fd;border-radius:12px;"></div>
<div class="t" style="left:1715.92px;top:1282.09px;font-size:20.8px;line-height:20.8px;color:#7090e6;font-weight:400;letter-spacing:0.325px;">10-20</div>
<svg class="r" style="left:1785.9px;top:1286.5px;" width="12" height="12" viewBox="0 0 12 12"><path d="M1 1 L11 11 M11 1 L1 11" stroke="#7393e8" stroke-width="1.3" stroke-linecap="round"/></svg>
<svg class="r" style="left:1961px;top:1286.0px;" width="20" height="12" viewBox="0 0 20 12"><path d="M2 2 L10 10 L18 2" stroke="#8d8d94" stroke-width="1.5" fill="none" stroke-linecap="round"/></svg>
<div class="r" style="left:954.0px;top:1358.2px;width:1828.0px;height:102.5px;background:#fefeff;border:1px solid #e0dfea;border-radius:16px;box-sizing:border-box;"></div>
<div class="r" style="left:983.0px;top:1392.2px;width:35.0px;height:35.0px;background:#4a63ae;border-radius:7px;"></div>
<svg class="r" style="left:983px;top:1392.2px;" width="35" height="35" viewBox="0 0 35 35"><path d="M11.5 18 L15.5 22 L23.5 14" stroke="#fff" stroke-width="1.35" fill="none" stroke-linecap="round" stroke-linejoin="round"/></svg>
<div class="t" style="left:1041.61px;top:1398.50px;font-size:23.1px;line-height:23.1px;color:#4a63ae;font-weight:400;letter-spacing:0.208px;-webkit-text-stroke:0.5px #4a63ae;">Lavigne Avril</div>
<div class="r" style="left:1584.5px;top:1370.7px;width:417.0px;height:71.8px;background:#fefeff;border:2px solid #e0dde8;border-radius:16px;box-sizing:border-box;"></div>
<div class="r" style="left:1591.3px;top:1384.5px;width:97.4px;height:44.6px;background:#eef1fd;border-radius:12px;"></div>
<div class="t" style="left:1605.53px;top:1396.84px;font-size:20.8px;line-height:20.8px;color:#7090e6;font-weight:400;letter-spacing:0.316px;">9-18</div>
<svg class="r" style="left:1663.8px;top:1401.2px;" width="12" height="12" viewBox="0 0 12 12"><path d="M1 1 L11 11 M11 1 L1 11" stroke="#7393e8" stroke-width="1.3" stroke-linecap="round"/></svg>
<div class="r" style="left:1702.3px;top:1384.5px;width:109.2px;height:44.6px;background:#eef1fd;border-radius:12px;"></div>
<div class="t" style="left:1715.92px;top:1396.84px;font-size:20.8px;line-height:20.8px;color:#7090e6;font-weight:400;letter-spacing:0.325px;">10-20</div>
<svg class="r" style="left:1785.9px;top:1401.2px;" width="12" height="12" viewBox="0 0 12 12"><path d="M1 1 L11 11 M11 1 L1 11" stroke="#7393e8" stroke-width="1.3" stroke-linecap="round"/></svg>
<svg class="r" style="left:1961px;top:1400.8px;" width="20" height="12" viewBox="0 0 20 12"><path d="M2 2 L10 10 L18 2" stroke="#8d8d94" stroke-width="1.5" fill="none" stroke-linecap="round"/></svg>
<div class="r" style="left:954.0px;top:1473.0px;width:1828.0px;height:102.5px;background:#fefeff;border:1px solid #e0dfea;border-radius:16px;box-sizing:border-box;"></div>
<div class="r" style="left:983.0px;top:1507.0px;width:35.0px;height:35.0px;background:#4a63ae;border-radius:7px;"></div>
<svg class="r" style="left:983px;top:1507.0px;" width="35" height="35" viewBox="0 0 35 35"><path d="M11.5 18 L15.5 22 L23.5 14" stroke="#fff" stroke-width="1.35" fill="none" stroke-linecap="round" stroke-linejoin="round"/></svg>
<div class="t" style="left:1041.61px;top:1513.25px;font-size:23.1px;line-height:23.1px;color:#4a63ae;font-weight:400;letter-spacing:0.311px;-webkit-text-stroke:0.5px #4a63ae;">Lopez Jennifer</div>
<div class="r" style="left:1584.5px;top:1485.4px;width:417.0px;height:71.8px;background:#fefeff;border:2px solid #e0dde8;border-radius:16px;box-sizing:border-box;"></div>
<div class="r" style="left:1591.3px;top:1499.3px;width:97.4px;height:44.6px;background:#eef1fd;border-radius:12px;"></div>
<div class="t" style="left:1605.53px;top:1511.59px;font-size:20.8px;line-height:20.8px;color:#7090e6;font-weight:400;letter-spacing:0.316px;">9-18</div>
<svg class="r" style="left:1663.8px;top:1516.0px;" width="12" height="12" viewBox="0 0 12 12"><path d="M1 1 L11 11 M11 1 L1 11" stroke="#7393e8" stroke-width="1.3" stroke-linecap="round"/></svg>
<div class="r" style="left:1702.3px;top:1499.3px;width:109.2px;height:44.6px;background:#eef1fd;border-radius:12px;"></div>
<div class="t" style="left:1715.92px;top:1511.59px;font-size:20.8px;line-height:20.8px;color:#7090e6;font-weight:400;letter-spacing:0.325px;">10-20</div>
<svg class="r" style="left:1785.9px;top:1516.0px;" width="12" height="12" viewBox="0 0 12 12"><path d="M1 1 L11 11 M11 1 L1 11" stroke="#7393e8" stroke-width="1.3" stroke-linecap="round"/></svg>
<svg class="r" style="left:1961px;top:1515.5px;" width="20" height="12" viewBox="0 0 20 12"><path d="M2 2 L10 10 L18 2" stroke="#8d8d94" stroke-width="1.5" fill="none" stroke-linecap="round"/></svg>
<div class="r" style="left:954.0px;top:1587.8px;width:1828.0px;height:102.5px;background:#fefeff;border:1px solid #e0dfea;border-radius:16px;box-sizing:border-box;"></div>
<div class="r" style="left:2703px;top:1369.5px;width:87px;height:87px;border-radius:50%;background:#3d72e8;box-shadow:0 3px 10px rgba(60,80,160,0.12);"></div>
<svg class="r" style="left:2719px;top:1391px;" width="54" height="46" viewBox="0 0 54 46"><defs><radialGradient id="cb" cx="0.55" cy="0.72" r="0.75"><stop offset="0" stop-color="#bccaf3"/><stop offset="0.5" stop-color="#d3dcf8"/><stop offset="0.85" stop-color="#f4f6fe"/><stop offset="1" stop-color="#ffffff"/></radialGradient></defs>
<path d="M4.5 7.6 L46.5 3 Q48.3 2.9 48.5 4.6 L51 28 Q51.2 29.5 49.6 29.8 L35.8 33.2 L29.4 42.5 L21.4 35 L7 36.2 Q5.6 36.3 5.4 34.8 L2.9 9.6 Q2.8 7.8 4.5 7.6 Z" fill="url(#cb)"/></svg>
</div></body></html>
